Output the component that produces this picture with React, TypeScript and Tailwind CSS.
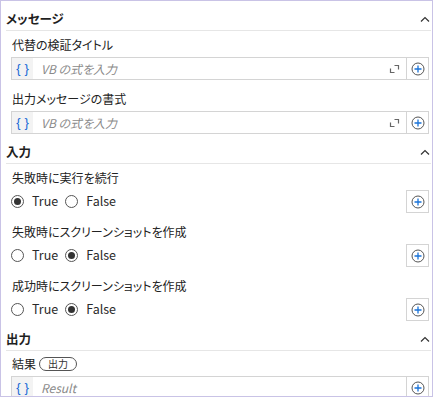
import { Fragment } from "react";

const font = {
  fontFamily: '"Noto Sans CJK JP", "Noto Sans", sans-serif',
  fontFeatureSettings: '"palt"',
};

const Chevron = () => (
  <svg width="10" height="6" viewBox="0 0 10 6" className="mr-[1px]">
    <path d="M1 5.5L5 1.5L9 5.5" fill="none" stroke="#333" strokeWidth="1.2" />
  </svg>
);

const PlusCircle = () => (
  <svg width="14" height="14" viewBox="0 0 14 14">
    <circle cx="7" cy="7" r="6" fill="none" stroke="#555" strokeWidth="1" />
    <path d="M7 3.5V10.5M3.5 7H10.5" stroke="#1a73d9" strokeWidth="1.3" />
  </svg>
);

const ExpandIcon = () => (
  <svg width="11" height="10" viewBox="0 0 11 10">
    <path d="M5.5 1.5H9.5V5.5" fill="none" stroke="#666" strokeWidth="1.2" />
    <path d="M1.5 4.5V8.5H5.5" fill="none" stroke="#666" strokeWidth="1.2" />
  </svg>
);

const Header = ({ title }: { title: string }) => (
  <div className="flex items-center justify-between pt-[5px] pb-[3px] border-b border-[#e6e6e6] leading-[16px]">
    <span className="text-[12.5px] font-bold text-[#1f1f1f]">{title}</span>
    <Chevron />
  </div>
);

const ExprInput = ({
  placeholder,
  expand = true,
}: {
  placeholder: string;
  expand?: boolean;
}) => (
  <div className="flex h-[23px] border border-[#d4d4d4] bg-white">
    <div
      className="w-[21px] bg-[#f3f3f3] flex items-center justify-center gap-[4px] text-[13px] text-[#1769d6]"
      style={{ fontFamily: '"Liberation Sans", sans-serif' }}
    >
      <span>{"{"}</span>
      <span>{"}"}</span>
    </div>
    <div className="flex-1 flex items-center pl-[8px] text-[12px] italic text-[#8a8a8a]">
      {placeholder}
    </div>
    {expand && (
      <div className="flex items-center pr-[6px]">
        <ExpandIcon />
      </div>
    )}
    <div className="w-[22px] border-l border-[#d4d4d4] flex items-center justify-center">
      <PlusCircle />
    </div>
  </div>
);

const Radio = ({ checked, label }: { checked: boolean; label: string }) => (
  <div className="flex items-center">
    <span className="w-[13px] h-[13px] rounded-full border border-[#555] flex items-center justify-center">
      {checked && <span className="w-[7px] h-[7px] rounded-full bg-[#333]" />}
    </span>
    <span className="ml-[8px] text-[12.5px] text-[#2a2a2a]">{label}</span>
  </div>
);

const RadioField = ({ label, value }: { label: string; value: boolean }) => (
  <div className="pt-[6px] pb-[5px] pl-[5px] pr-[2px]">
    <div className="pl-[1px] text-[12px] leading-[16px] text-[#222]">{label}</div>
    <div className="mt-[4px] flex items-center justify-between h-[23px]">
      <div className="flex items-center gap-[7px]">
        <Radio checked={value} label="True" />
        <Radio checked={!value} label="False" />
      </div>
      <div className="w-[23px] h-[23px] border border-[#d4d4d4] flex items-center justify-center">
        <PlusCircle />
      </div>
    </div>
  </div>
);

const ExprField = ({ label }: { label: string }) => (
  <div className="pt-[6px] pb-[5px] pl-[5px] pr-[2px]">
    <div className="pl-[1px] text-[12px] leading-[16px] text-[#222]">{label}</div>
    <div className="mt-[4px]">
      <ExprInput placeholder="VB の式を入力" />
    </div>
  </div>
);

const App = () => {
  const radios = [
    { label: "失敗時に実行を続行", value: true },
    { label: "失敗時にスクリーンショットを作成", value: false },
    { label: "成功時にスクリーンショットを作成", value: false },
  ];

  return (
    <div
      className="w-[433px] h-[397px] border border-[#c9c3e6] bg-white overflow-hidden pl-[5px] pr-[1px] pt-[5px]"
      style={font}
    >
      <Header title="メッセージ" />
      <ExprField label="代替の検証タイトル" />
      <ExprField label="出力メッセージの書式" />

      <Header title="入力" />
      {radios.map((r) => (
        <Fragment key={r.label}>
          <RadioField label={r.label} value={r.value} />
        </Fragment>
      ))}

      <Header title="出力" />
      <div className="pt-[4px] pl-[5px] pr-[2px]">
        <div className="flex items-center h-[17px] pl-[1px] text-[12px] text-[#222]">
          <span>結果</span>
          <span className="ml-[3px] px-[8px] h-[14px] flex items-center rounded-full border border-[#555] text-[10px] text-[#333]">
            出力
          </span>
        </div>
        <div className="mt-[4px]">
          <ExprInput placeholder="Result" expand={false} />
        </div>
      </div>
    </div>
  );
};

export default App;
